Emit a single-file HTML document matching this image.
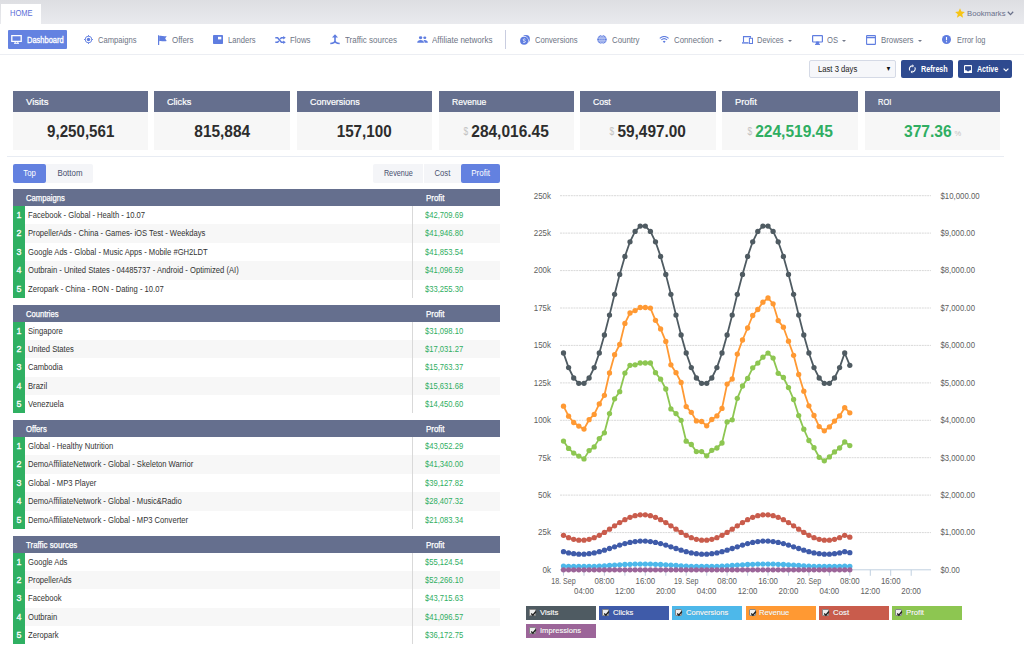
<!DOCTYPE html>
<html><head><meta charset="utf-8"><title>Dashboard</title>
<style>
*{box-sizing:border-box;margin:0;padding:0}
html,body{width:1024px;height:656px;overflow:hidden;background:#fff;font-family:"Liberation Sans",sans-serif;}
body{position:relative;color:#333}
.abs{position:absolute}
.topbar{position:absolute;left:0;top:0;width:1024px;height:24px;background:linear-gradient(#dddee2,#e9eaee)}
.fit{display:inline-block;transform-origin:0 50%;white-space:nowrap}
.cb .fit,.tg .fit{transform-origin:50% 50%}
.hometab{position:absolute;left:1px;top:4px;width:40px;height:20px;background:#fff;color:#5b6fd8;font-size:9px;line-height:19px;padding-left:8.8px}
.bm{position:absolute;top:8.5px;left:967px;font-size:8px;color:#69708a;line-height:10px}
.nav{position:absolute;left:0;top:24px;width:1024px;height:31px;background:#fff;border-bottom:1px solid #eceef3}
.ni{position:absolute;top:12.1px;font-size:8.2px;line-height:10px;color:#6d7484;white-space:nowrap}
.ic{position:absolute}
.dash{position:absolute;left:8px;top:6px;width:59px;height:19px;background:#6482e1;border-radius:1px}
.dash > span{position:absolute;left:18.7px;top:5.8px;font-size:8.2px;line-height:10px;color:#fff;-webkit-text-stroke:0.3px #fff}
.sep{position:absolute;left:505px;top:6px;width:1px;height:19px;background:#c9cde0}
.caret{position:absolute;top:15.8px;width:0;height:0;border-left:2px solid transparent;border-right:2px solid transparent;border-top:2.4px solid #747b8b}
.sel{position:absolute;left:809px;top:60px;width:87px;height:18px;border:1px solid #d5dae6;border-radius:2px;background:#f6f7fa;font-size:8.4px;line-height:17px;padding-left:7.5px;color:#222}
.sel i{position:absolute;right:3.3px;top:-1.2px;font-style:normal;font-size:7px;color:#111;transform:scaleX(0.85)}
.btn{position:absolute;top:60px;height:18px;background:#2e4a8f;border-radius:2px;color:#fff;font-size:8.4px;font-weight:bold;line-height:18px}
.card{position:absolute;top:91px;width:135px;height:58.5px;background:#f7f7f7}
.ch{height:21px;background:#656f8e;color:#fff;font-size:9.6px;line-height:22.6px;padding-left:12.5px;-webkit-text-stroke:0.2px #fff}
.cb{height:37.5px;text-align:center;line-height:40.6px;font-size:15.6px;color:#2d2d2d;white-space:nowrap}
.cb b{font-weight:bold}
.cb.g b{color:#2fae62}
.cb i{font-style:normal;font-size:10.5px;color:#c2c2c2;font-weight:normal;position:relative;top:-2.4px}
.cb i.pre{margin-right:2.2px;display:inline-block;transform:scaleX(0.8)}
.cb i.suf{margin-left:3px;font-size:7.5px;top:-1px}
.hr{position:absolute;left:6.5px;top:156px;width:997px;height:1px;background:#e8ecf3}
.tg{position:absolute;top:164px;height:19px;font-size:8.2px;line-height:19px;text-align:center;color:#48506e;background:#f4f5f8}
.tg.on{background:#6381e0;color:#fff;border-radius:2px}
.tbl{position:absolute;left:13px;width:487px}
.th{height:17px;background:#656f8e;color:#fff;font-size:8.4px;line-height:18.2px;position:relative;-webkit-text-stroke:0.25px #fff}
.th .c1{position:absolute;left:12.5px}
.th .c2{position:absolute;left:412.5px}
.tr{height:18.4px;position:relative;font-size:8.45px;line-height:19.5px;color:#333;background:#fff;white-space:nowrap}
.tr.alt{background:#f7f7f7}
.tr .n{position:absolute;left:0;top:0;width:12px;height:18.4px;background:#2fb062;color:#fff;text-align:center;font-size:8.8px;-webkit-text-stroke:0.3px #fff}
.tr .nm{position:absolute;left:15.3px}
.tr .v{position:absolute;left:399px;width:88px;height:18.4px;border-left:1px solid #d9d9d9;padding-left:12px;color:#2fae62}
svg.chart{position:absolute;left:0;top:0}
.lbl text{font-family:"Liberation Sans",sans-serif;font-size:9px;fill:#606060}
.lg{position:absolute;width:70px;height:14.3px;color:#fff;font-size:8px;line-height:14.6px;padding-left:13.8px;-webkit-text-stroke:0.15px #fff;text-shadow:0 0 1px rgba(0,0,0,.3)}
.cbx{position:absolute;left:3px;top:3.4px;width:7px;height:7px;background:#eee;border:0.5px solid #888;border-radius:1px;line-height:0}
.cbx svg{position:absolute;left:0;top:0}
</style></head><body>
<div class="topbar"><div class="hometab"><span class="fit" style="transform:scaleX(0.833)">HOME</span></div>
<svg class="ic" style="left:955px;top:8px" width="10" height="10" viewBox="0 0 10 10"><path d="M5 0.3 L6.4 3.6 L9.9 3.9 L7.2 6.2 L8.1 9.7 L5 7.8 L1.9 9.7 L2.8 6.2 L0.1 3.9 L3.6 3.6 Z" fill="#f6c416"/></svg>
<div class="bm"><span class="fit" style="transform:scaleX(0.962)">Bookmarks</span></div>
<svg class="ic" style="left:1007px;top:10.5px" width="7" height="5" viewBox="0 0 7 5"><path d="M0.8 0.8 L3.5 3.6 L6.2 0.8" stroke="#69708a" stroke-width="1.3" fill="none"/></svg>
</div>
<div class="nav">
<div class="dash">
<svg class="ic" style="left:3px;top:5px" width="11" height="9" viewBox="0 0 11 9"><path d="M0.8 0.6 H10.2 V6.4 H0.8 Z" fill="none" stroke="#fff" stroke-width="1.3"/><path d="M3 8.3 H8 M4.2 6.5 V8.3 M6.8 6.5 V8.3" stroke="#fff" stroke-width="1"/></svg>
<span><span class="fit" style="transform:scaleX(0.914)">Dashboard</span></span></div>
<!-- Campaigns -->
<svg class="ic" style="left:84px;top:11px" width="9" height="9" viewBox="0 0 9 9"><circle cx="4.5" cy="4.5" r="3.3" fill="none" stroke="#5f7de0" stroke-width="0.9"/><circle cx="4.5" cy="4.5" r="1.7" fill="#5f7de0"/><path d="M4.5 0V1.4M4.5 7.6V9M0 4.5H1.4M7.6 4.5H9" stroke="#5f7de0" stroke-width="0.9"/></svg>
<div class="ni" style="left:98.3px"><span class="fit" style="transform:scaleX(0.932)">Campaigns</span></div>
<!-- Offers -->
<svg class="ic" style="left:157.5px;top:10.5px" width="9" height="10" viewBox="0 0 9 10"><path d="M0.6 0.3V10" stroke="#5f7de0" stroke-width="1.2"/><path d="M1.2 1 C3 0.2 4.5 1.8 8.7 0.9 L7.2 3.5 L8.7 6 C5 7 3.2 5.2 1.2 6.2 Z" fill="#5f7de0"/></svg>
<div class="ni" style="left:171.5px"><span class="fit" style="transform:scaleX(0.970)">Offers</span></div>
<!-- Landers -->
<svg class="ic" style="left:212.5px;top:11px" width="10" height="9" viewBox="0 0 10 9"><rect x="0" y="0" width="10" height="9" rx="0.8" fill="#5f7de0"/><rect x="5" y="1.8" width="3.3" height="2.6" fill="#fff"/></svg>
<div class="ni" style="left:227.5px"><span class="fit" style="transform:scaleX(0.929)">Landers</span></div>
<!-- Flows -->
<svg class="ic" style="left:275px;top:11.8px" width="11" height="8" viewBox="0 0 11 8"><path d="M0.3 1.7H2.6L6.4 6.3H9M0.3 6.3H2.6L3.8 4.9M5.2 3.1L6.4 1.7H9" stroke="#5f7de0" stroke-width="1.5" fill="none"/><path d="M8.2 0L10.8 1.7L8.2 3.4ZM8.2 4.6L10.8 6.3L8.2 8Z" fill="#5f7de0"/></svg>
<div class="ni" style="left:290px"><span class="fit" style="transform:scaleX(0.958)">Flows</span></div>
<!-- Traffic sources -->
<svg class="ic" style="left:330px;top:10px" width="10" height="11" viewBox="0 0 10 11"><path d="M5 1.5V6.8C5 8.6 3.2 9.4 0.3 9.5M5 6.8C5 8.6 6.8 9.4 9.7 9.5" stroke="#5f7de0" stroke-width="1.6" fill="none"/><path d="M2 3.6L5 0.2L8 3.6Z" fill="#5f7de0"/></svg>
<div class="ni" style="left:345px"><span class="fit" style="transform:scaleX(0.977)">Traffic sources</span></div>
<!-- Affiliate networks -->
<svg class="ic" style="left:416.5px;top:11.9px" width="11" height="7" viewBox="0 0 11 8" preserveAspectRatio="none"><circle cx="3.6" cy="2" r="1.7" fill="#5f7de0"/><circle cx="7.8" cy="2" r="1.5" fill="#5f7de0"/><path d="M0.2 7.8C0.2 5.6 1.8 4.6 3.6 4.6C5.4 4.6 7 5.6 7 7.8ZM7.6 7.8C7.6 6.4 7.2 5.4 6.4 4.8C8.6 4.2 10.9 5.2 10.9 7.8Z" fill="#5f7de0"/></svg>
<div class="ni" style="left:431.5px"><span class="fit" style="transform:scaleX(0.980)">Affiliate networks</span></div>
<div class="sep"></div>
<!-- Conversions -->
<svg class="ic" style="left:519.5px;top:10.5px" width="10" height="10" viewBox="0 0 10 10"><circle cx="6" cy="3.9" r="3.9" fill="#5f7de0"/><circle cx="4.1" cy="5.7" r="4.6" fill="#fff"/><circle cx="4.1" cy="5.7" r="4" fill="#5f7de0"/><path d="M5.4 4.2C4.4 3.6 3.2 4 3.2 4.9C3.2 6 5.4 5.5 5.4 6.6C5.4 7.5 4 7.8 3 7.1" stroke="#fff" stroke-width="0.8" fill="none"/></svg>
<div class="ni" style="left:534.5px"><span class="fit" style="transform:scaleX(0.934)">Conversions</span></div>
<!-- Country -->
<svg class="ic" style="left:597px;top:11px" width="10" height="9" viewBox="0 0 10 9"><ellipse cx="5" cy="4.5" rx="4.8" ry="4.4" fill="#5f7de0"/><ellipse cx="5" cy="4.5" rx="2.1" ry="4.2" fill="none" stroke="#fff" stroke-width="0.55"/><path d="M0.4 3.1H9.6M0.4 5.9H9.6M5 0.2V8.8" stroke="#fff" stroke-width="0.55"/></svg>
<div class="ni" style="left:611.5px"><span class="fit" style="transform:scaleX(0.959)">Country</span></div>
<!-- Connection -->
<svg class="ic" style="left:658.8px;top:12px" width="10.4" height="7.2" viewBox="0 0 11 8"><path d="M0.6 2.6C3.4 -0.2 7.6 -0.2 10.4 2.6M2.3 4.4C4.2 2.6 6.8 2.6 8.7 4.4" stroke="#5f7de0" stroke-width="1.2" fill="none"/><path d="M3.9 6C4.9 5.2 6.1 5.2 7.1 6L5.5 7.8Z" fill="#5f7de0"/></svg>
<div class="ni" style="left:673.5px"><span class="fit" style="transform:scaleX(0.954)">Connection</span></div><div class="caret" style="left:717.5px"></div>
<!-- Devices -->
<svg class="ic" style="left:741.5px;top:11.5px" width="11" height="8" viewBox="0 0 11 8"><path d="M1.5 6V0.6H8.5V1.8" stroke="#5f7de0" stroke-width="1.1" fill="none"/><path d="M0 6.2H6.6V7.6H0Z" fill="#5f7de0"/><rect x="7.4" y="2.3" width="3.1" height="5.2" fill="none" stroke="#5f7de0" stroke-width="1"/></svg>
<div class="ni" style="left:756.5px"><span class="fit" style="transform:scaleX(0.910)">Devices</span></div><div class="caret" style="left:788px"></div>
<!-- OS -->
<svg class="ic" style="left:812px;top:10.5px" width="11" height="10" viewBox="0 0 11 10"><rect x="0.6" y="0.6" width="9.8" height="6.4" rx="0.5" fill="none" stroke="#5f7de0" stroke-width="1.2"/><path d="M4.3 7V9H6.7V7ZM3 9.4H8" stroke="#5f7de0" stroke-width="1" fill="#5f7de0"/></svg>
<div class="ni" style="left:827px"><span class="fit" style="transform:scaleX(0.929)">OS</span></div><div class="caret" style="left:841.5px"></div>
<!-- Browsers -->
<svg class="ic" style="left:866px;top:10.5px" width="10" height="10" viewBox="0 0 10 10"><rect x="0.6" y="0.6" width="8.8" height="8.8" rx="0.5" fill="none" stroke="#5f7de0" stroke-width="1.1"/><path d="M0.6 2.6H9.4" stroke="#5f7de0" stroke-width="1.3"/></svg>
<div class="ni" style="left:880.5px"><span class="fit" style="transform:scaleX(0.952)">Browsers</span></div><div class="caret" style="left:917.5px"></div>
<!-- Error log -->
<svg class="ic" style="left:942px;top:11px" width="9" height="9" viewBox="0 0 9 9"><circle cx="4.5" cy="4.5" r="4.5" fill="#5f7de0"/><path d="M4.5 2V5.2M4.5 6.3V7.3" stroke="#fff" stroke-width="1.1"/></svg>
<div class="ni" style="left:956.5px"><span class="fit" style="transform:scaleX(0.907)">Error log</span></div>
</div>

<div class="sel"><span class="fit" style="transform:scaleX(0.916)">Last 3 days</span><i>&#9660;</i></div>
<div class="btn" style="left:901px;width:52px">
<svg class="ic" style="left:7px;top:4px" width="8.6" height="9.8" viewBox="0 0 8 9"><path d="M4 1.7A2.8 2.8 0 0 0 1.7 6M6.3 3A2.8 2.8 0 0 1 4 7.3" stroke="#fff" stroke-width="1" fill="none"/><path d="M4 0.2L5.6 1.7L4 3.2ZM4 5.8L2.4 7.3L4 8.8Z" fill="#fff"/></svg>
<span style="position:absolute;left:19.6px;top:-0.1px"><span class="fit" style="transform:scaleX(0.858)">Refresh</span></span></div>
<div class="btn" style="left:958px;width:54px">
<svg class="ic" style="left:5.9px;top:4.7px" width="8.2" height="8.6" viewBox="0 0 9 8" preserveAspectRatio="none"><rect x="0.6" y="0.6" width="7.8" height="6.8" rx="0.6" fill="none" stroke="#fff" stroke-width="1.2"/><path d="M0.6 5H2.8C3 6.4 6 6.4 6.2 5H8.4V7.4H0.6Z" fill="#fff"/></svg>
<span style="position:absolute;left:19.2px;top:-0.1px"><span class="fit" style="transform:scaleX(0.845)">Active</span></span>
<svg class="ic" style="left:45px;top:7.5px" width="6" height="4" viewBox="0 0 6 4"><path d="M0.6 0.6L3 3L5.4 0.6" stroke="#fff" stroke-width="1.2" fill="none"/></svg>
</div>

<div class="card" style="left:13.0px;width:135px"><div class="ch"><span class="fit" style="transform:scaleX(0.989)">Visits</span></div><div class="cb"><b><span class="fit" style="transform:scaleX(0.969)">9,250,561</span></b></div></div>
<div class="card" style="left:154.0px;width:136px"><div class="ch"><span class="fit" style="transform:scaleX(0.947)">Clicks</span></div><div class="cb"><b><span class="fit" style="transform:scaleX(0.989)">815,884</span></b></div></div>
<div class="card" style="left:297.0px;width:135px"><div class="ch"><span class="fit" style="transform:scaleX(0.933)">Conversions</span></div><div class="cb"><b><span class="fit" style="transform:scaleX(0.976)">157,100</span></b></div></div>
<div class="card" style="left:439.0px;width:135px"><div class="ch"><span class="fit" style="transform:scaleX(0.892)">Revenue</span></div><div class="cb"><i class="pre">$</i><b><span class="fit" style="transform:scaleX(0.993)">284,016.45</span></b></div></div>
<div class="card" style="left:580.0px;width:136px"><div class="ch"><span class="fit" style="transform:scaleX(0.899)">Cost</span></div><div class="cb"><i class="pre">$</i><b><span class="fit" style="transform:scaleX(0.987)">59,497.00</span></b></div></div>
<div class="card" style="left:722.0px;width:136px"><div class="ch"><span class="fit" style="transform:scaleX(0.971)">Profit</span></div><div class="cb g"><i class="pre">$</i><b><span class="fit" style="transform:scaleX(0.996)">224,519.45</span></b></div></div>
<div class="card" style="left:865.0px;width:135px"><div class="ch"><span class="fit" style="transform:scaleX(0.777)">ROI</span></div><div class="cb g"><b><span class="fit" style="transform:scaleX(1.001)">377.36</span></b><i class="suf">%</i></div></div>
<div class="hr"></div>
<div class="tg on" style="left:13px;width:33px"><span class="fit" style="transform:scaleX(0.947)">Top</span></div>
<div class="tg" style="left:46px;width:47px;border-radius:0 2px 2px 0"><span class="fit" style="transform:scaleX(0.963)">Bottom</span></div>
<div class="tg" style="left:373px;width:50px;border-radius:2px 0 0 2px"><span class="fit" style="transform:scaleX(0.885)">Revenue</span></div>
<div class="tg" style="left:423.5px;width:37px"><span class="fit" style="transform:scaleX(0.935)">Cost</span></div>
<div class="tg on" style="left:460.5px;width:39.5px"><span class="fit" style="transform:scaleX(0.980)">Profit</span></div>
<div class="tbl" style="top:189.0px"><div class="th"><span class="c1"><span class="fit" style="transform:scaleX(0.918)">Campaigns</span></span><span class="c2"><span class="fit" style="transform:scaleX(0.946)">Profit</span></span></div>
<div class="tr"><span class="n">1</span><span class="nm"><span class="fit" style="transform:scaleX(0.904)">Facebook - Global - Health - 10.07</span></span><span class="v"><span class="fit" style="transform:scaleX(0.904)">$42,709.69</span></span></div>
<div class="tr alt"><span class="n">2</span><span class="nm"><span class="fit" style="transform:scaleX(0.904)">PropellerAds - China - Games- iOS Test - Weekdays</span></span><span class="v"><span class="fit" style="transform:scaleX(0.904)">$41,946.80</span></span></div>
<div class="tr"><span class="n">3</span><span class="nm"><span class="fit" style="transform:scaleX(0.904)">Google Ads - Global - Music Apps - Mobile #GH2LDT</span></span><span class="v"><span class="fit" style="transform:scaleX(0.904)">$41,853.54</span></span></div>
<div class="tr alt"><span class="n">4</span><span class="nm"><span class="fit" style="transform:scaleX(0.904)">Outbrain - United States - 04485737 - Android - Optimized (AI)</span></span><span class="v"><span class="fit" style="transform:scaleX(0.904)">$41,096.59</span></span></div>
<div class="tr"><span class="n">5</span><span class="nm"><span class="fit" style="transform:scaleX(0.904)">Zeropark - China - RON - Dating - 10.07</span></span><span class="v"><span class="fit" style="transform:scaleX(0.904)">$33,255.30</span></span></div>
</div>
<div class="tbl" style="top:304.5px"><div class="th"><span class="c1"><span class="fit" style="transform:scaleX(0.907)">Countries</span></span><span class="c2"><span class="fit" style="transform:scaleX(0.946)">Profit</span></span></div>
<div class="tr"><span class="n">1</span><span class="nm"><span class="fit" style="transform:scaleX(0.904)">Singapore</span></span><span class="v"><span class="fit" style="transform:scaleX(0.904)">$31,098.10</span></span></div>
<div class="tr alt"><span class="n">2</span><span class="nm"><span class="fit" style="transform:scaleX(0.904)">United States</span></span><span class="v"><span class="fit" style="transform:scaleX(0.904)">$17,031.27</span></span></div>
<div class="tr"><span class="n">3</span><span class="nm"><span class="fit" style="transform:scaleX(0.904)">Cambodia</span></span><span class="v"><span class="fit" style="transform:scaleX(0.904)">$15,763.37</span></span></div>
<div class="tr alt"><span class="n">4</span><span class="nm"><span class="fit" style="transform:scaleX(0.904)">Brazil</span></span><span class="v"><span class="fit" style="transform:scaleX(0.904)">$15,631.68</span></span></div>
<div class="tr"><span class="n">5</span><span class="nm"><span class="fit" style="transform:scaleX(0.904)">Venezuela</span></span><span class="v"><span class="fit" style="transform:scaleX(0.904)">$14,450.60</span></span></div>
</div>
<div class="tbl" style="top:420.0px"><div class="th"><span class="c1"><span class="fit" style="transform:scaleX(0.916)">Offers</span></span><span class="c2"><span class="fit" style="transform:scaleX(0.946)">Profit</span></span></div>
<div class="tr"><span class="n">1</span><span class="nm"><span class="fit" style="transform:scaleX(0.904)">Global - Healthy Nutrition</span></span><span class="v"><span class="fit" style="transform:scaleX(0.904)">$43,052.29</span></span></div>
<div class="tr alt"><span class="n">2</span><span class="nm"><span class="fit" style="transform:scaleX(0.904)">DemoAffiliateNetwork - Global - Skeleton Warrior</span></span><span class="v"><span class="fit" style="transform:scaleX(0.904)">$41,340.00</span></span></div>
<div class="tr"><span class="n">3</span><span class="nm"><span class="fit" style="transform:scaleX(0.904)">Global - MP3 Player</span></span><span class="v"><span class="fit" style="transform:scaleX(0.904)">$39,127.82</span></span></div>
<div class="tr alt"><span class="n">4</span><span class="nm"><span class="fit" style="transform:scaleX(0.904)">DemoAffiliateNetwork - Global - Music&amp;Radio</span></span><span class="v"><span class="fit" style="transform:scaleX(0.904)">$28,407.32</span></span></div>
<div class="tr"><span class="n">5</span><span class="nm"><span class="fit" style="transform:scaleX(0.904)">DemoAffiliateNetwork - Global - MP3 Converter</span></span><span class="v"><span class="fit" style="transform:scaleX(0.904)">$21,083.34</span></span></div>
</div>
<div class="tbl" style="top:535.5px"><div class="th"><span class="c1"><span class="fit" style="transform:scaleX(0.941)">Traffic sources</span></span><span class="c2"><span class="fit" style="transform:scaleX(0.946)">Profit</span></span></div>
<div class="tr"><span class="n">1</span><span class="nm"><span class="fit" style="transform:scaleX(0.904)">Google Ads</span></span><span class="v"><span class="fit" style="transform:scaleX(0.904)">$55,124.54</span></span></div>
<div class="tr alt"><span class="n">2</span><span class="nm"><span class="fit" style="transform:scaleX(0.904)">PropellerAds</span></span><span class="v"><span class="fit" style="transform:scaleX(0.904)">$52,266.10</span></span></div>
<div class="tr"><span class="n">3</span><span class="nm"><span class="fit" style="transform:scaleX(0.904)">Facebook</span></span><span class="v"><span class="fit" style="transform:scaleX(0.904)">$43,715.63</span></span></div>
<div class="tr alt"><span class="n">4</span><span class="nm"><span class="fit" style="transform:scaleX(0.904)">Outbrain</span></span><span class="v"><span class="fit" style="transform:scaleX(0.904)">$41,096.57</span></span></div>
<div class="tr"><span class="n">5</span><span class="nm"><span class="fit" style="transform:scaleX(0.904)">Zeropark</span></span><span class="v"><span class="fit" style="transform:scaleX(0.904)">$36,172.75</span></span></div>
</div>
<svg class="chart" width="1024" height="656" viewBox="0 0 1024 656">
<line x1="560" x2="931" y1="195.7" y2="195.7" stroke="#d9d9d9" stroke-width="1" stroke-dasharray="2,0.7"/>
<line x1="560" x2="931" y1="233.1" y2="233.1" stroke="#d9d9d9" stroke-width="1" stroke-dasharray="2,0.7"/>
<line x1="560" x2="931" y1="270.6" y2="270.6" stroke="#d9d9d9" stroke-width="1" stroke-dasharray="2,0.7"/>
<line x1="560" x2="931" y1="308.0" y2="308.0" stroke="#d9d9d9" stroke-width="1" stroke-dasharray="2,0.7"/>
<line x1="560" x2="931" y1="345.4" y2="345.4" stroke="#d9d9d9" stroke-width="1" stroke-dasharray="2,0.7"/>
<line x1="560" x2="931" y1="382.9" y2="382.9" stroke="#d9d9d9" stroke-width="1" stroke-dasharray="2,0.7"/>
<line x1="560" x2="931" y1="420.3" y2="420.3" stroke="#d9d9d9" stroke-width="1" stroke-dasharray="2,0.7"/>
<line x1="560" x2="931" y1="457.7" y2="457.7" stroke="#d9d9d9" stroke-width="1" stroke-dasharray="2,0.7"/>
<line x1="560" x2="931" y1="495.1" y2="495.1" stroke="#d9d9d9" stroke-width="1" stroke-dasharray="2,0.7"/>
<line x1="560" x2="931" y1="532.6" y2="532.6" stroke="#d9d9d9" stroke-width="1" stroke-dasharray="2,0.7"/>
<line x1="560" x2="931" y1="569.8" y2="569.8" stroke="#c0d0e0" stroke-width="1"/>
<line x1="563.5" x2="563.5" y1="569.8" y2="575.8" stroke="#c0d0e0" stroke-width="1"/>
<line x1="584.0" x2="584.0" y1="569.8" y2="575.8" stroke="#c0d0e0" stroke-width="1"/>
<line x1="604.4" x2="604.4" y1="569.8" y2="575.8" stroke="#c0d0e0" stroke-width="1"/>
<line x1="624.9" x2="624.9" y1="569.8" y2="575.8" stroke="#c0d0e0" stroke-width="1"/>
<line x1="645.3" x2="645.3" y1="569.8" y2="575.8" stroke="#c0d0e0" stroke-width="1"/>
<line x1="665.8" x2="665.8" y1="569.8" y2="575.8" stroke="#c0d0e0" stroke-width="1"/>
<line x1="686.2" x2="686.2" y1="569.8" y2="575.8" stroke="#c0d0e0" stroke-width="1"/>
<line x1="706.7" x2="706.7" y1="569.8" y2="575.8" stroke="#c0d0e0" stroke-width="1"/>
<line x1="727.1" x2="727.1" y1="569.8" y2="575.8" stroke="#c0d0e0" stroke-width="1"/>
<line x1="747.6" x2="747.6" y1="569.8" y2="575.8" stroke="#c0d0e0" stroke-width="1"/>
<line x1="768.0" x2="768.0" y1="569.8" y2="575.8" stroke="#c0d0e0" stroke-width="1"/>
<line x1="788.5" x2="788.5" y1="569.8" y2="575.8" stroke="#c0d0e0" stroke-width="1"/>
<line x1="808.9" x2="808.9" y1="569.8" y2="575.8" stroke="#c0d0e0" stroke-width="1"/>
<line x1="829.4" x2="829.4" y1="569.8" y2="575.8" stroke="#c0d0e0" stroke-width="1"/>
<line x1="849.8" x2="849.8" y1="569.8" y2="575.8" stroke="#c0d0e0" stroke-width="1"/>
<line x1="870.3" x2="870.3" y1="569.8" y2="575.8" stroke="#c0d0e0" stroke-width="1"/>
<line x1="890.7" x2="890.7" y1="569.8" y2="575.8" stroke="#c0d0e0" stroke-width="1"/>
<line x1="911.2" x2="911.2" y1="569.8" y2="575.8" stroke="#c0d0e0" stroke-width="1"/>
<g class="lbl"><text x="551.2" y="583.6" textLength="24.5" lengthAdjust="spacingAndGlyphs">18. Sep</text><text x="574.1" y="593.9" textLength="19.7" lengthAdjust="spacingAndGlyphs">04:00</text><text x="594.6" y="583.6" textLength="19.7" lengthAdjust="spacingAndGlyphs">08:00</text><text x="615.0" y="593.9" textLength="19.7" lengthAdjust="spacingAndGlyphs">12:00</text><text x="635.5" y="583.6" textLength="19.7" lengthAdjust="spacingAndGlyphs">16:00</text><text x="655.9" y="593.9" textLength="19.7" lengthAdjust="spacingAndGlyphs">20:00</text><text x="674.0" y="583.6" textLength="24.5" lengthAdjust="spacingAndGlyphs">19. Sep</text><text x="696.8" y="593.9" textLength="19.7" lengthAdjust="spacingAndGlyphs">04:00</text><text x="717.3" y="583.6" textLength="19.7" lengthAdjust="spacingAndGlyphs">08:00</text><text x="737.7" y="593.9" textLength="19.7" lengthAdjust="spacingAndGlyphs">12:00</text><text x="758.2" y="583.6" textLength="19.7" lengthAdjust="spacingAndGlyphs">16:00</text><text x="778.6" y="593.9" textLength="19.7" lengthAdjust="spacingAndGlyphs">20:00</text><text x="796.7" y="583.6" textLength="24.5" lengthAdjust="spacingAndGlyphs">20. Sep</text><text x="819.5" y="593.9" textLength="19.7" lengthAdjust="spacingAndGlyphs">04:00</text><text x="840.0" y="583.6" textLength="19.7" lengthAdjust="spacingAndGlyphs">08:00</text><text x="860.4" y="593.9" textLength="19.7" lengthAdjust="spacingAndGlyphs">12:00</text><text x="880.9" y="583.6" textLength="19.7" lengthAdjust="spacingAndGlyphs">16:00</text><text x="901.3" y="593.9" textLength="19.7" lengthAdjust="spacingAndGlyphs">20:00</text><text x="533.8" y="198.5" textLength="17.2" lengthAdjust="spacingAndGlyphs">250k</text><text x="940.5" y="198.5" textLength="39.2" lengthAdjust="spacingAndGlyphs">$10,000.00</text><text x="533.8" y="235.9" textLength="17.2" lengthAdjust="spacingAndGlyphs">225k</text><text x="940.5" y="235.9" textLength="34.5" lengthAdjust="spacingAndGlyphs">$9,000.00</text><text x="533.8" y="273.4" textLength="17.2" lengthAdjust="spacingAndGlyphs">200k</text><text x="940.5" y="273.4" textLength="34.5" lengthAdjust="spacingAndGlyphs">$8,000.00</text><text x="533.8" y="310.8" textLength="17.2" lengthAdjust="spacingAndGlyphs">175k</text><text x="940.5" y="310.8" textLength="34.5" lengthAdjust="spacingAndGlyphs">$7,000.00</text><text x="533.8" y="348.2" textLength="17.2" lengthAdjust="spacingAndGlyphs">150k</text><text x="940.5" y="348.2" textLength="34.5" lengthAdjust="spacingAndGlyphs">$6,000.00</text><text x="533.8" y="385.7" textLength="17.2" lengthAdjust="spacingAndGlyphs">125k</text><text x="940.5" y="385.7" textLength="34.5" lengthAdjust="spacingAndGlyphs">$5,000.00</text><text x="533.8" y="423.1" textLength="17.2" lengthAdjust="spacingAndGlyphs">100k</text><text x="940.5" y="423.1" textLength="34.5" lengthAdjust="spacingAndGlyphs">$4,000.00</text><text x="538.0" y="460.5" textLength="13.0" lengthAdjust="spacingAndGlyphs">75k</text><text x="940.5" y="460.5" textLength="34.5" lengthAdjust="spacingAndGlyphs">$3,000.00</text><text x="538.0" y="497.9" textLength="13.0" lengthAdjust="spacingAndGlyphs">50k</text><text x="940.5" y="497.9" textLength="34.5" lengthAdjust="spacingAndGlyphs">$2,000.00</text><text x="538.0" y="535.4" textLength="13.0" lengthAdjust="spacingAndGlyphs">25k</text><text x="940.5" y="535.4" textLength="34.5" lengthAdjust="spacingAndGlyphs">$1,000.00</text><text x="542.4" y="572.8" textLength="8.6" lengthAdjust="spacingAndGlyphs">0k</text><text x="940.5" y="572.8" textLength="19.3" lengthAdjust="spacingAndGlyphs">$0.00</text></g>
<polyline points="563.5,353.0 568.6,367.6 573.7,378.0 578.8,383.3 584.0,383.3 589.1,378.0 594.2,367.6 599.3,353.0 604.4,335.0 609.5,315.1 614.6,294.3 619.7,274.4 624.9,256.4 630.0,241.8 635.1,231.4 640.2,226.1 645.3,226.1 650.4,231.4 655.5,241.8 660.6,256.4 665.8,274.4 670.9,294.3 676.0,315.1 681.1,335.0 686.2,353.0 691.3,367.6 696.4,378.0 701.6,383.3 706.7,383.3 711.8,378.0 716.9,367.6 722.0,353.0 727.1,335.0 732.2,315.1 737.3,294.3 742.5,274.4 747.6,256.4 752.7,241.8 757.8,231.4 762.9,226.1 768.0,226.1 773.1,231.4 778.2,241.8 783.4,256.4 788.5,274.4 793.6,294.3 798.7,315.1 803.8,335.0 808.9,353.0 814.0,367.6 819.2,378.0 824.3,383.3 829.4,383.3 834.5,378.0 839.6,367.6 844.7,353.0 849.8,365.3" fill="none" stroke="#4f5b62" stroke-width="1.8" stroke-linejoin="round" stroke-linecap="round"/>
<g fill="#4f5b62"><circle cx="563.5" cy="353.0" r="2.65"/><circle cx="568.6" cy="367.6" r="2.65"/><circle cx="573.7" cy="378.0" r="2.65"/><circle cx="578.8" cy="383.3" r="2.65"/><circle cx="584.0" cy="383.3" r="2.65"/><circle cx="589.1" cy="378.0" r="2.65"/><circle cx="594.2" cy="367.6" r="2.65"/><circle cx="599.3" cy="353.0" r="2.65"/><circle cx="604.4" cy="335.0" r="2.65"/><circle cx="609.5" cy="315.1" r="2.65"/><circle cx="614.6" cy="294.3" r="2.65"/><circle cx="619.7" cy="274.4" r="2.65"/><circle cx="624.9" cy="256.4" r="2.65"/><circle cx="630.0" cy="241.8" r="2.65"/><circle cx="635.1" cy="231.4" r="2.65"/><circle cx="640.2" cy="226.1" r="2.65"/><circle cx="645.3" cy="226.1" r="2.65"/><circle cx="650.4" cy="231.4" r="2.65"/><circle cx="655.5" cy="241.8" r="2.65"/><circle cx="660.6" cy="256.4" r="2.65"/><circle cx="665.8" cy="274.4" r="2.65"/><circle cx="670.9" cy="294.3" r="2.65"/><circle cx="676.0" cy="315.1" r="2.65"/><circle cx="681.1" cy="335.0" r="2.65"/><circle cx="686.2" cy="353.0" r="2.65"/><circle cx="691.3" cy="367.6" r="2.65"/><circle cx="696.4" cy="378.0" r="2.65"/><circle cx="701.6" cy="383.3" r="2.65"/><circle cx="706.7" cy="383.3" r="2.65"/><circle cx="711.8" cy="378.0" r="2.65"/><circle cx="716.9" cy="367.6" r="2.65"/><circle cx="722.0" cy="353.0" r="2.65"/><circle cx="727.1" cy="335.0" r="2.65"/><circle cx="732.2" cy="315.1" r="2.65"/><circle cx="737.3" cy="294.3" r="2.65"/><circle cx="742.5" cy="274.4" r="2.65"/><circle cx="747.6" cy="256.4" r="2.65"/><circle cx="752.7" cy="241.8" r="2.65"/><circle cx="757.8" cy="231.4" r="2.65"/><circle cx="762.9" cy="226.1" r="2.65"/><circle cx="768.0" cy="226.1" r="2.65"/><circle cx="773.1" cy="231.4" r="2.65"/><circle cx="778.2" cy="241.8" r="2.65"/><circle cx="783.4" cy="256.4" r="2.65"/><circle cx="788.5" cy="274.4" r="2.65"/><circle cx="793.6" cy="294.3" r="2.65"/><circle cx="798.7" cy="315.1" r="2.65"/><circle cx="803.8" cy="335.0" r="2.65"/><circle cx="808.9" cy="353.0" r="2.65"/><circle cx="814.0" cy="367.6" r="2.65"/><circle cx="819.2" cy="378.0" r="2.65"/><circle cx="824.3" cy="383.3" r="2.65"/><circle cx="829.4" cy="383.3" r="2.65"/><circle cx="834.5" cy="378.0" r="2.65"/><circle cx="839.6" cy="367.6" r="2.65"/><circle cx="844.7" cy="353.0" r="2.65"/><circle cx="849.8" cy="365.3" r="2.65"/></g>
<polyline points="563.5,551.7 568.6,552.9 573.7,553.7 578.8,554.2 584.0,554.2 589.1,553.7 594.2,552.9 599.3,551.7 604.4,550.2 609.5,548.5 614.6,546.8 619.7,545.1 624.9,543.6 630.0,542.4 635.1,541.6 640.2,541.1 645.3,541.1 650.4,541.6 655.5,542.4 660.6,543.6 665.8,545.1 670.9,546.8 676.0,548.5 681.1,550.2 686.2,551.7 691.3,552.9 696.4,553.7 701.6,554.2 706.7,554.2 711.8,553.7 716.9,552.9 722.0,551.7 727.1,550.2 732.2,548.5 737.3,546.8 742.5,545.1 747.6,543.6 752.7,542.4 757.8,541.6 762.9,541.1 768.0,541.1 773.1,541.6 778.2,542.4 783.4,543.6 788.5,545.1 793.6,546.8 798.7,548.5 803.8,550.2 808.9,551.7 814.0,552.9 819.2,553.7 824.3,554.2 829.4,554.2 834.5,553.7 839.6,552.9 844.7,551.7 849.8,552.7" fill="none" stroke="#3f5ba9" stroke-width="1.8" stroke-linejoin="round" stroke-linecap="round"/>
<g fill="#3f5ba9"><circle cx="563.5" cy="551.7" r="2.65"/><circle cx="568.6" cy="552.9" r="2.65"/><circle cx="573.7" cy="553.7" r="2.65"/><circle cx="578.8" cy="554.2" r="2.65"/><circle cx="584.0" cy="554.2" r="2.65"/><circle cx="589.1" cy="553.7" r="2.65"/><circle cx="594.2" cy="552.9" r="2.65"/><circle cx="599.3" cy="551.7" r="2.65"/><circle cx="604.4" cy="550.2" r="2.65"/><circle cx="609.5" cy="548.5" r="2.65"/><circle cx="614.6" cy="546.8" r="2.65"/><circle cx="619.7" cy="545.1" r="2.65"/><circle cx="624.9" cy="543.6" r="2.65"/><circle cx="630.0" cy="542.4" r="2.65"/><circle cx="635.1" cy="541.6" r="2.65"/><circle cx="640.2" cy="541.1" r="2.65"/><circle cx="645.3" cy="541.1" r="2.65"/><circle cx="650.4" cy="541.6" r="2.65"/><circle cx="655.5" cy="542.4" r="2.65"/><circle cx="660.6" cy="543.6" r="2.65"/><circle cx="665.8" cy="545.1" r="2.65"/><circle cx="670.9" cy="546.8" r="2.65"/><circle cx="676.0" cy="548.5" r="2.65"/><circle cx="681.1" cy="550.2" r="2.65"/><circle cx="686.2" cy="551.7" r="2.65"/><circle cx="691.3" cy="552.9" r="2.65"/><circle cx="696.4" cy="553.7" r="2.65"/><circle cx="701.6" cy="554.2" r="2.65"/><circle cx="706.7" cy="554.2" r="2.65"/><circle cx="711.8" cy="553.7" r="2.65"/><circle cx="716.9" cy="552.9" r="2.65"/><circle cx="722.0" cy="551.7" r="2.65"/><circle cx="727.1" cy="550.2" r="2.65"/><circle cx="732.2" cy="548.5" r="2.65"/><circle cx="737.3" cy="546.8" r="2.65"/><circle cx="742.5" cy="545.1" r="2.65"/><circle cx="747.6" cy="543.6" r="2.65"/><circle cx="752.7" cy="542.4" r="2.65"/><circle cx="757.8" cy="541.6" r="2.65"/><circle cx="762.9" cy="541.1" r="2.65"/><circle cx="768.0" cy="541.1" r="2.65"/><circle cx="773.1" cy="541.6" r="2.65"/><circle cx="778.2" cy="542.4" r="2.65"/><circle cx="783.4" cy="543.6" r="2.65"/><circle cx="788.5" cy="545.1" r="2.65"/><circle cx="793.6" cy="546.8" r="2.65"/><circle cx="798.7" cy="548.5" r="2.65"/><circle cx="803.8" cy="550.2" r="2.65"/><circle cx="808.9" cy="551.7" r="2.65"/><circle cx="814.0" cy="552.9" r="2.65"/><circle cx="819.2" cy="553.7" r="2.65"/><circle cx="824.3" cy="554.2" r="2.65"/><circle cx="829.4" cy="554.2" r="2.65"/><circle cx="834.5" cy="553.7" r="2.65"/><circle cx="839.6" cy="552.9" r="2.65"/><circle cx="844.7" cy="551.7" r="2.65"/><circle cx="849.8" cy="552.7" r="2.65"/></g>
<polyline points="563.5,566.1 568.6,566.3 573.7,566.5 578.8,566.5 584.0,566.5 589.1,566.5 594.2,566.3 599.3,566.1 604.4,565.8 609.5,565.5 614.6,565.1 619.7,564.8 624.9,564.5 630.0,564.3 635.1,564.1 640.2,564.1 645.3,564.1 650.4,564.1 655.5,564.3 660.6,564.5 665.8,564.8 670.9,565.1 676.0,565.5 681.1,565.8 686.2,566.1 691.3,566.3 696.4,566.5 701.6,566.5 706.7,566.5 711.8,566.5 716.9,566.3 722.0,566.1 727.1,565.8 732.2,565.5 737.3,565.1 742.5,564.8 747.6,564.5 752.7,564.3 757.8,564.1 762.9,564.1 768.0,564.1 773.1,564.1 778.2,564.3 783.4,564.5 788.5,564.8 793.6,565.1 798.7,565.5 803.8,565.8 808.9,566.1 814.0,566.3 819.2,566.5 824.3,566.5 829.4,566.5 834.5,566.5 839.6,566.3 844.7,566.1 849.8,566.3" fill="none" stroke="#4db8ea" stroke-width="1.8" stroke-linejoin="round" stroke-linecap="round"/>
<g fill="#4db8ea"><circle cx="563.5" cy="566.1" r="2.65"/><circle cx="568.6" cy="566.3" r="2.65"/><circle cx="573.7" cy="566.5" r="2.65"/><circle cx="578.8" cy="566.5" r="2.65"/><circle cx="584.0" cy="566.5" r="2.65"/><circle cx="589.1" cy="566.5" r="2.65"/><circle cx="594.2" cy="566.3" r="2.65"/><circle cx="599.3" cy="566.1" r="2.65"/><circle cx="604.4" cy="565.8" r="2.65"/><circle cx="609.5" cy="565.5" r="2.65"/><circle cx="614.6" cy="565.1" r="2.65"/><circle cx="619.7" cy="564.8" r="2.65"/><circle cx="624.9" cy="564.5" r="2.65"/><circle cx="630.0" cy="564.3" r="2.65"/><circle cx="635.1" cy="564.1" r="2.65"/><circle cx="640.2" cy="564.1" r="2.65"/><circle cx="645.3" cy="564.1" r="2.65"/><circle cx="650.4" cy="564.1" r="2.65"/><circle cx="655.5" cy="564.3" r="2.65"/><circle cx="660.6" cy="564.5" r="2.65"/><circle cx="665.8" cy="564.8" r="2.65"/><circle cx="670.9" cy="565.1" r="2.65"/><circle cx="676.0" cy="565.5" r="2.65"/><circle cx="681.1" cy="565.8" r="2.65"/><circle cx="686.2" cy="566.1" r="2.65"/><circle cx="691.3" cy="566.3" r="2.65"/><circle cx="696.4" cy="566.5" r="2.65"/><circle cx="701.6" cy="566.5" r="2.65"/><circle cx="706.7" cy="566.5" r="2.65"/><circle cx="711.8" cy="566.5" r="2.65"/><circle cx="716.9" cy="566.3" r="2.65"/><circle cx="722.0" cy="566.1" r="2.65"/><circle cx="727.1" cy="565.8" r="2.65"/><circle cx="732.2" cy="565.5" r="2.65"/><circle cx="737.3" cy="565.1" r="2.65"/><circle cx="742.5" cy="564.8" r="2.65"/><circle cx="747.6" cy="564.5" r="2.65"/><circle cx="752.7" cy="564.3" r="2.65"/><circle cx="757.8" cy="564.1" r="2.65"/><circle cx="762.9" cy="564.1" r="2.65"/><circle cx="768.0" cy="564.1" r="2.65"/><circle cx="773.1" cy="564.1" r="2.65"/><circle cx="778.2" cy="564.3" r="2.65"/><circle cx="783.4" cy="564.5" r="2.65"/><circle cx="788.5" cy="564.8" r="2.65"/><circle cx="793.6" cy="565.1" r="2.65"/><circle cx="798.7" cy="565.5" r="2.65"/><circle cx="803.8" cy="565.8" r="2.65"/><circle cx="808.9" cy="566.1" r="2.65"/><circle cx="814.0" cy="566.3" r="2.65"/><circle cx="819.2" cy="566.5" r="2.65"/><circle cx="824.3" cy="566.5" r="2.65"/><circle cx="829.4" cy="566.5" r="2.65"/><circle cx="834.5" cy="566.5" r="2.65"/><circle cx="839.6" cy="566.3" r="2.65"/><circle cx="844.7" cy="566.1" r="2.65"/><circle cx="849.8" cy="566.3" r="2.65"/></g>
<polyline points="563.5,406.2 568.6,416.2 573.7,422.5 578.8,426.1 584.0,429.1 589.1,419.7 594.2,414.4 599.3,403.9 604.4,395.3 609.5,373.0 614.6,354.7 619.7,344.5 624.9,323.4 630.0,313.0 635.1,310.6 640.2,307.5 645.3,307.5 650.4,308.1 655.5,320.3 660.6,328.9 665.8,341.4 670.9,364.8 676.0,372.7 681.1,382.5 686.2,406.6 691.3,412.3 696.4,420.9 701.6,421.5 706.7,425.8 711.8,419.5 716.9,415.9 722.0,408.4 727.1,384.1 732.2,379.0 737.3,354.1 742.5,340.0 747.6,328.0 752.7,315.5 757.8,309.5 762.9,302.2 768.0,298.0 773.1,303.8 778.2,320.6 783.4,327.2 788.5,341.2 793.6,355.3 798.7,374.5 803.8,391.2 808.9,405.8 814.0,415.5 819.2,426.6 824.3,430.8 829.4,426.9 834.5,421.1 839.6,415.9 844.7,407.7 849.8,412.8" fill="none" stroke="#ff9933" stroke-width="1.8" stroke-linejoin="round" stroke-linecap="round"/>
<g fill="#ff9933"><circle cx="563.5" cy="406.2" r="2.65"/><circle cx="568.6" cy="416.2" r="2.65"/><circle cx="573.7" cy="422.5" r="2.65"/><circle cx="578.8" cy="426.1" r="2.65"/><circle cx="584.0" cy="429.1" r="2.65"/><circle cx="589.1" cy="419.7" r="2.65"/><circle cx="594.2" cy="414.4" r="2.65"/><circle cx="599.3" cy="403.9" r="2.65"/><circle cx="604.4" cy="395.3" r="2.65"/><circle cx="609.5" cy="373.0" r="2.65"/><circle cx="614.6" cy="354.7" r="2.65"/><circle cx="619.7" cy="344.5" r="2.65"/><circle cx="624.9" cy="323.4" r="2.65"/><circle cx="630.0" cy="313.0" r="2.65"/><circle cx="635.1" cy="310.6" r="2.65"/><circle cx="640.2" cy="307.5" r="2.65"/><circle cx="645.3" cy="307.5" r="2.65"/><circle cx="650.4" cy="308.1" r="2.65"/><circle cx="655.5" cy="320.3" r="2.65"/><circle cx="660.6" cy="328.9" r="2.65"/><circle cx="665.8" cy="341.4" r="2.65"/><circle cx="670.9" cy="364.8" r="2.65"/><circle cx="676.0" cy="372.7" r="2.65"/><circle cx="681.1" cy="382.5" r="2.65"/><circle cx="686.2" cy="406.6" r="2.65"/><circle cx="691.3" cy="412.3" r="2.65"/><circle cx="696.4" cy="420.9" r="2.65"/><circle cx="701.6" cy="421.5" r="2.65"/><circle cx="706.7" cy="425.8" r="2.65"/><circle cx="711.8" cy="419.5" r="2.65"/><circle cx="716.9" cy="415.9" r="2.65"/><circle cx="722.0" cy="408.4" r="2.65"/><circle cx="727.1" cy="384.1" r="2.65"/><circle cx="732.2" cy="379.0" r="2.65"/><circle cx="737.3" cy="354.1" r="2.65"/><circle cx="742.5" cy="340.0" r="2.65"/><circle cx="747.6" cy="328.0" r="2.65"/><circle cx="752.7" cy="315.5" r="2.65"/><circle cx="757.8" cy="309.5" r="2.65"/><circle cx="762.9" cy="302.2" r="2.65"/><circle cx="768.0" cy="298.0" r="2.65"/><circle cx="773.1" cy="303.8" r="2.65"/><circle cx="778.2" cy="320.6" r="2.65"/><circle cx="783.4" cy="327.2" r="2.65"/><circle cx="788.5" cy="341.2" r="2.65"/><circle cx="793.6" cy="355.3" r="2.65"/><circle cx="798.7" cy="374.5" r="2.65"/><circle cx="803.8" cy="391.2" r="2.65"/><circle cx="808.9" cy="405.8" r="2.65"/><circle cx="814.0" cy="415.5" r="2.65"/><circle cx="819.2" cy="426.6" r="2.65"/><circle cx="824.3" cy="430.8" r="2.65"/><circle cx="829.4" cy="426.9" r="2.65"/><circle cx="834.5" cy="421.1" r="2.65"/><circle cx="839.6" cy="415.9" r="2.65"/><circle cx="844.7" cy="407.7" r="2.65"/><circle cx="849.8" cy="412.8" r="2.65"/></g>
<polyline points="563.5,535.3 568.6,537.7 573.7,539.3 578.8,540.2 584.0,540.2 589.1,539.3 594.2,537.7 599.3,535.3 604.4,532.4 609.5,529.2 614.6,525.8 619.7,522.6 624.9,519.7 630.0,517.3 635.1,515.7 640.2,514.8 645.3,514.8 650.4,515.7 655.5,517.3 660.6,519.7 665.8,522.6 670.9,525.8 676.0,529.2 681.1,532.4 686.2,535.3 691.3,537.7 696.4,539.3 701.6,540.2 706.7,540.2 711.8,539.3 716.9,537.7 722.0,535.3 727.1,532.4 732.2,529.2 737.3,525.8 742.5,522.6 747.6,519.7 752.7,517.3 757.8,515.7 762.9,514.8 768.0,514.8 773.1,515.7 778.2,517.3 783.4,519.7 788.5,522.6 793.6,525.8 798.7,529.2 803.8,532.4 808.9,535.3 814.0,537.7 819.2,539.3 824.3,540.2 829.4,540.2 834.5,539.3 839.6,537.7 844.7,535.3 849.8,537.2" fill="none" stroke="#c95c4c" stroke-width="1.8" stroke-linejoin="round" stroke-linecap="round"/>
<g fill="#c95c4c"><circle cx="563.5" cy="535.3" r="2.65"/><circle cx="568.6" cy="537.7" r="2.65"/><circle cx="573.7" cy="539.3" r="2.65"/><circle cx="578.8" cy="540.2" r="2.65"/><circle cx="584.0" cy="540.2" r="2.65"/><circle cx="589.1" cy="539.3" r="2.65"/><circle cx="594.2" cy="537.7" r="2.65"/><circle cx="599.3" cy="535.3" r="2.65"/><circle cx="604.4" cy="532.4" r="2.65"/><circle cx="609.5" cy="529.2" r="2.65"/><circle cx="614.6" cy="525.8" r="2.65"/><circle cx="619.7" cy="522.6" r="2.65"/><circle cx="624.9" cy="519.7" r="2.65"/><circle cx="630.0" cy="517.3" r="2.65"/><circle cx="635.1" cy="515.7" r="2.65"/><circle cx="640.2" cy="514.8" r="2.65"/><circle cx="645.3" cy="514.8" r="2.65"/><circle cx="650.4" cy="515.7" r="2.65"/><circle cx="655.5" cy="517.3" r="2.65"/><circle cx="660.6" cy="519.7" r="2.65"/><circle cx="665.8" cy="522.6" r="2.65"/><circle cx="670.9" cy="525.8" r="2.65"/><circle cx="676.0" cy="529.2" r="2.65"/><circle cx="681.1" cy="532.4" r="2.65"/><circle cx="686.2" cy="535.3" r="2.65"/><circle cx="691.3" cy="537.7" r="2.65"/><circle cx="696.4" cy="539.3" r="2.65"/><circle cx="701.6" cy="540.2" r="2.65"/><circle cx="706.7" cy="540.2" r="2.65"/><circle cx="711.8" cy="539.3" r="2.65"/><circle cx="716.9" cy="537.7" r="2.65"/><circle cx="722.0" cy="535.3" r="2.65"/><circle cx="727.1" cy="532.4" r="2.65"/><circle cx="732.2" cy="529.2" r="2.65"/><circle cx="737.3" cy="525.8" r="2.65"/><circle cx="742.5" cy="522.6" r="2.65"/><circle cx="747.6" cy="519.7" r="2.65"/><circle cx="752.7" cy="517.3" r="2.65"/><circle cx="757.8" cy="515.7" r="2.65"/><circle cx="762.9" cy="514.8" r="2.65"/><circle cx="768.0" cy="514.8" r="2.65"/><circle cx="773.1" cy="515.7" r="2.65"/><circle cx="778.2" cy="517.3" r="2.65"/><circle cx="783.4" cy="519.7" r="2.65"/><circle cx="788.5" cy="522.6" r="2.65"/><circle cx="793.6" cy="525.8" r="2.65"/><circle cx="798.7" cy="529.2" r="2.65"/><circle cx="803.8" cy="532.4" r="2.65"/><circle cx="808.9" cy="535.3" r="2.65"/><circle cx="814.0" cy="537.7" r="2.65"/><circle cx="819.2" cy="539.3" r="2.65"/><circle cx="824.3" cy="540.2" r="2.65"/><circle cx="829.4" cy="540.2" r="2.65"/><circle cx="834.5" cy="539.3" r="2.65"/><circle cx="839.6" cy="537.7" r="2.65"/><circle cx="844.7" cy="535.3" r="2.65"/><circle cx="849.8" cy="537.2" r="2.65"/></g>
<polyline points="563.5,441.1 568.6,448.4 573.7,453.1 578.8,456.1 584.0,458.9 589.1,450.6 594.2,446.9 599.3,438.6 604.4,432.8 609.5,413.6 614.6,398.8 619.7,391.7 624.9,373.1 630.0,365.3 635.1,364.8 640.2,363.0 645.3,363.0 650.4,363.0 655.5,372.7 660.6,379.2 665.8,389.0 670.9,408.9 676.0,413.6 681.1,420.3 686.2,441.2 691.3,444.5 696.4,451.6 701.6,451.6 706.7,455.8 711.8,450.3 716.9,448.0 722.0,443.0 727.1,421.9 732.2,419.8 737.3,398.3 742.5,386.0 747.6,378.4 752.7,367.8 757.8,363.1 762.9,357.2 768.0,353.1 773.1,358.1 778.2,373.3 783.4,377.5 788.5,387.6 793.6,399.5 798.7,415.6 803.8,429.2 808.9,440.5 814.0,447.7 819.2,457.3 824.3,460.8 829.4,456.9 834.5,451.9 839.6,448.0 844.7,442.0 849.8,445.6" fill="none" stroke="#8dc651" stroke-width="1.8" stroke-linejoin="round" stroke-linecap="round"/>
<g fill="#8dc651"><circle cx="563.5" cy="441.1" r="2.65"/><circle cx="568.6" cy="448.4" r="2.65"/><circle cx="573.7" cy="453.1" r="2.65"/><circle cx="578.8" cy="456.1" r="2.65"/><circle cx="584.0" cy="458.9" r="2.65"/><circle cx="589.1" cy="450.6" r="2.65"/><circle cx="594.2" cy="446.9" r="2.65"/><circle cx="599.3" cy="438.6" r="2.65"/><circle cx="604.4" cy="432.8" r="2.65"/><circle cx="609.5" cy="413.6" r="2.65"/><circle cx="614.6" cy="398.8" r="2.65"/><circle cx="619.7" cy="391.7" r="2.65"/><circle cx="624.9" cy="373.1" r="2.65"/><circle cx="630.0" cy="365.3" r="2.65"/><circle cx="635.1" cy="364.8" r="2.65"/><circle cx="640.2" cy="363.0" r="2.65"/><circle cx="645.3" cy="363.0" r="2.65"/><circle cx="650.4" cy="363.0" r="2.65"/><circle cx="655.5" cy="372.7" r="2.65"/><circle cx="660.6" cy="379.2" r="2.65"/><circle cx="665.8" cy="389.0" r="2.65"/><circle cx="670.9" cy="408.9" r="2.65"/><circle cx="676.0" cy="413.6" r="2.65"/><circle cx="681.1" cy="420.3" r="2.65"/><circle cx="686.2" cy="441.2" r="2.65"/><circle cx="691.3" cy="444.5" r="2.65"/><circle cx="696.4" cy="451.6" r="2.65"/><circle cx="701.6" cy="451.6" r="2.65"/><circle cx="706.7" cy="455.8" r="2.65"/><circle cx="711.8" cy="450.3" r="2.65"/><circle cx="716.9" cy="448.0" r="2.65"/><circle cx="722.0" cy="443.0" r="2.65"/><circle cx="727.1" cy="421.9" r="2.65"/><circle cx="732.2" cy="419.8" r="2.65"/><circle cx="737.3" cy="398.3" r="2.65"/><circle cx="742.5" cy="386.0" r="2.65"/><circle cx="747.6" cy="378.4" r="2.65"/><circle cx="752.7" cy="367.8" r="2.65"/><circle cx="757.8" cy="363.1" r="2.65"/><circle cx="762.9" cy="357.2" r="2.65"/><circle cx="768.0" cy="353.1" r="2.65"/><circle cx="773.1" cy="358.1" r="2.65"/><circle cx="778.2" cy="373.3" r="2.65"/><circle cx="783.4" cy="377.5" r="2.65"/><circle cx="788.5" cy="387.6" r="2.65"/><circle cx="793.6" cy="399.5" r="2.65"/><circle cx="798.7" cy="415.6" r="2.65"/><circle cx="803.8" cy="429.2" r="2.65"/><circle cx="808.9" cy="440.5" r="2.65"/><circle cx="814.0" cy="447.7" r="2.65"/><circle cx="819.2" cy="457.3" r="2.65"/><circle cx="824.3" cy="460.8" r="2.65"/><circle cx="829.4" cy="456.9" r="2.65"/><circle cx="834.5" cy="451.9" r="2.65"/><circle cx="839.6" cy="448.0" r="2.65"/><circle cx="844.7" cy="442.0" r="2.65"/><circle cx="849.8" cy="445.6" r="2.65"/></g>
<polyline points="563.5,569.8 568.6,569.8 573.7,569.8 578.8,569.8 584.0,569.8 589.1,569.8 594.2,569.8 599.3,569.8 604.4,569.8 609.5,569.8 614.6,569.8 619.7,569.8 624.9,569.8 630.0,569.8 635.1,569.8 640.2,569.8 645.3,569.8 650.4,569.8 655.5,569.8 660.6,569.8 665.8,569.8 670.9,569.8 676.0,569.8 681.1,569.8 686.2,569.8 691.3,569.8 696.4,569.8 701.6,569.8 706.7,569.8 711.8,569.8 716.9,569.8 722.0,569.8 727.1,569.8 732.2,569.8 737.3,569.8 742.5,569.8 747.6,569.8 752.7,569.8 757.8,569.8 762.9,569.8 768.0,569.8 773.1,569.8 778.2,569.8 783.4,569.8 788.5,569.8 793.6,569.8 798.7,569.8 803.8,569.8 808.9,569.8 814.0,569.8 819.2,569.8 824.3,569.8 829.4,569.8 834.5,569.8 839.6,569.8 844.7,569.8 849.8,569.8" fill="none" stroke="#9c6599" stroke-width="1.8" stroke-linejoin="round" stroke-linecap="round"/>
<g fill="#9c6599"><circle cx="563.5" cy="569.8" r="2.65"/><circle cx="568.6" cy="569.8" r="2.65"/><circle cx="573.7" cy="569.8" r="2.65"/><circle cx="578.8" cy="569.8" r="2.65"/><circle cx="584.0" cy="569.8" r="2.65"/><circle cx="589.1" cy="569.8" r="2.65"/><circle cx="594.2" cy="569.8" r="2.65"/><circle cx="599.3" cy="569.8" r="2.65"/><circle cx="604.4" cy="569.8" r="2.65"/><circle cx="609.5" cy="569.8" r="2.65"/><circle cx="614.6" cy="569.8" r="2.65"/><circle cx="619.7" cy="569.8" r="2.65"/><circle cx="624.9" cy="569.8" r="2.65"/><circle cx="630.0" cy="569.8" r="2.65"/><circle cx="635.1" cy="569.8" r="2.65"/><circle cx="640.2" cy="569.8" r="2.65"/><circle cx="645.3" cy="569.8" r="2.65"/><circle cx="650.4" cy="569.8" r="2.65"/><circle cx="655.5" cy="569.8" r="2.65"/><circle cx="660.6" cy="569.8" r="2.65"/><circle cx="665.8" cy="569.8" r="2.65"/><circle cx="670.9" cy="569.8" r="2.65"/><circle cx="676.0" cy="569.8" r="2.65"/><circle cx="681.1" cy="569.8" r="2.65"/><circle cx="686.2" cy="569.8" r="2.65"/><circle cx="691.3" cy="569.8" r="2.65"/><circle cx="696.4" cy="569.8" r="2.65"/><circle cx="701.6" cy="569.8" r="2.65"/><circle cx="706.7" cy="569.8" r="2.65"/><circle cx="711.8" cy="569.8" r="2.65"/><circle cx="716.9" cy="569.8" r="2.65"/><circle cx="722.0" cy="569.8" r="2.65"/><circle cx="727.1" cy="569.8" r="2.65"/><circle cx="732.2" cy="569.8" r="2.65"/><circle cx="737.3" cy="569.8" r="2.65"/><circle cx="742.5" cy="569.8" r="2.65"/><circle cx="747.6" cy="569.8" r="2.65"/><circle cx="752.7" cy="569.8" r="2.65"/><circle cx="757.8" cy="569.8" r="2.65"/><circle cx="762.9" cy="569.8" r="2.65"/><circle cx="768.0" cy="569.8" r="2.65"/><circle cx="773.1" cy="569.8" r="2.65"/><circle cx="778.2" cy="569.8" r="2.65"/><circle cx="783.4" cy="569.8" r="2.65"/><circle cx="788.5" cy="569.8" r="2.65"/><circle cx="793.6" cy="569.8" r="2.65"/><circle cx="798.7" cy="569.8" r="2.65"/><circle cx="803.8" cy="569.8" r="2.65"/><circle cx="808.9" cy="569.8" r="2.65"/><circle cx="814.0" cy="569.8" r="2.65"/><circle cx="819.2" cy="569.8" r="2.65"/><circle cx="824.3" cy="569.8" r="2.65"/><circle cx="829.4" cy="569.8" r="2.65"/><circle cx="834.5" cy="569.8" r="2.65"/><circle cx="839.6" cy="569.8" r="2.65"/><circle cx="844.7" cy="569.8" r="2.65"/><circle cx="849.8" cy="569.8" r="2.65"/></g>
</svg>
<div class="lg" style="left:526.0px;top:605.6px;background:#4f5b62"><span class="cbx"><svg width="7" height="7" viewBox="0 0 7 7"><path d="M1.2 3.6 L2.9 5.3 L5.9 1.5" stroke="#222" stroke-width="1.4" fill="none"/></svg></span><span class="fit" style="transform:scaleX(0.965)">Visits</span></div>
<div class="lg" style="left:599.2px;top:605.6px;background:#3f5ba9"><span class="cbx"><svg width="7" height="7" viewBox="0 0 7 7"><path d="M1.2 3.6 L2.9 5.3 L5.9 1.5" stroke="#222" stroke-width="1.4" fill="none"/></svg></span><span class="fit" style="transform:scaleX(0.951)">Clicks</span></div>
<div class="lg" style="left:672.4px;top:605.6px;background:#4db8ea"><span class="cbx"><svg width="7" height="7" viewBox="0 0 7 7"><path d="M1.2 3.6 L2.9 5.3 L5.9 1.5" stroke="#222" stroke-width="1.4" fill="none"/></svg></span><span class="fit" style="transform:scaleX(0.949)">Conversions</span></div>
<div class="lg" style="left:745.6px;top:605.6px;background:#ff9933"><span class="cbx"><svg width="7" height="7" viewBox="0 0 7 7"><path d="M1.2 3.6 L2.9 5.3 L5.9 1.5" stroke="#222" stroke-width="1.4" fill="none"/></svg></span><span class="fit" style="transform:scaleX(0.946)">Revenue</span></div>
<div class="lg" style="left:818.8px;top:605.6px;background:#c95c4c"><span class="cbx"><svg width="7" height="7" viewBox="0 0 7 7"><path d="M1.2 3.6 L2.9 5.3 L5.9 1.5" stroke="#222" stroke-width="1.4" fill="none"/></svg></span><span class="fit" style="transform:scaleX(0.979)">Cost</span></div>
<div class="lg" style="left:892.0px;top:605.6px;background:#8dc651"><span class="cbx"><svg width="7" height="7" viewBox="0 0 7 7"><path d="M1.2 3.6 L2.9 5.3 L5.9 1.5" stroke="#222" stroke-width="1.4" fill="none"/></svg></span><span class="fit" style="transform:scaleX(0.964)">Profit</span></div>
<div class="lg" style="left:526.0px;top:623.5px;background:#9c6599"><span class="cbx"><svg width="7" height="7" viewBox="0 0 7 7"><path d="M1.2 3.6 L2.9 5.3 L5.9 1.5" stroke="#222" stroke-width="1.4" fill="none"/></svg></span><span class="fit" style="transform:scaleX(0.953)">Impressions</span></div>
</body></html>
